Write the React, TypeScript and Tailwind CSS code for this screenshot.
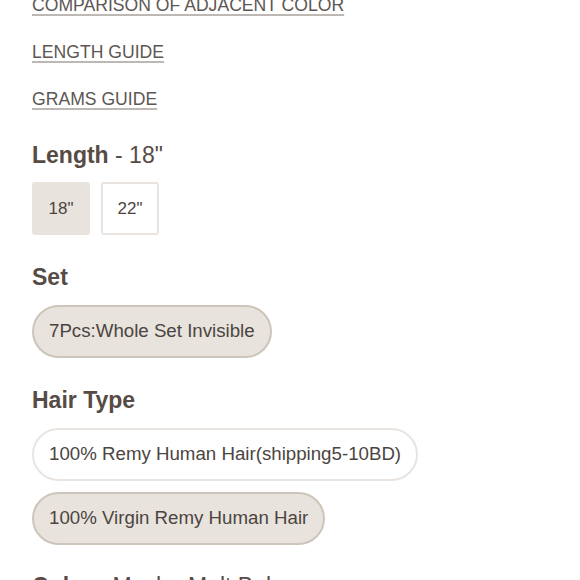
import React, { useState } from 'react';

const links = ['COMPARISON OF ADJACENT COLOR', 'LENGTH GUIDE', 'GRAMS GUIDE'];
const lengths = ['18"', '22"'];
const hairTypes = ['100% Remy Human Hair(shipping5-10BD)', '100% Virgin Remy Human Hair'];

const Heading: React.FC<{ label: string; value?: string; className?: string }> = ({ label, value, className }) => (
  <div className={`h-[28px] text-[23px] leading-[28px] text-[#574b45] whitespace-nowrap ${className ?? ''}`}>
    <span className="font-bold">{label}</span>
    {value && <span className="font-normal"> - {value}</span>}
  </div>
);

const Pill: React.FC<{ label: string; active: boolean; onClick: () => void }> = ({ label, active, onClick }) => (
  <button
    onClick={onClick}
    className={`h-[53px] self-start rounded-full border-2 px-[15px] text-[18.7px] text-[#4b4541] ${
      active ? 'bg-[#e8e3dd] border-[#cdc5bb]' : 'bg-white border-[#e9e4df]'
    }`}
  >
    {label}
  </button>
);

export default function App() {
  const [length, setLength] = useState('18"');
  const [set] = useState('7Pcs:Whole Set Invisible');
  const [hairType, setHairType] = useState(hairTypes[1]);

  return (
    <div className="h-[580px] w-[580px] overflow-hidden bg-white px-8 font-['Liberation_Sans',Arial,sans-serif]">
      <div className="-mt-[18px] flex flex-col">
        {links.map((l) => (
          <a
            key={l}
            href="#"
            className="block h-[47px] text-[17.6px] leading-[47px] text-[#5d5753] underline decoration-[#bdb8b4] decoration-2 underline-offset-[3px]"
          >
            {l}
          </a>
        ))}
      </div>

      <Heading label="Length" value={length} className="mt-[18px]" />
      <div className="mt-[13px] flex gap-[11px]">
        {lengths.map((l) => (
          <button
            key={l}
            onClick={() => setLength(l)}
            className={`flex h-[53px] w-[58px] items-center justify-center rounded-[3px] border-2 text-[17px] text-[#4b4541] ${
              length === l ? 'bg-[#e8e3dd] border-[#e8e3dd]' : 'bg-white border-[#e9e4df]'
            }`}
          >
            {l}
          </button>
        ))}
      </div>

      <Heading label="Set" className="mt-[28px]" />
      <div className="mt-[14px] flex flex-col">
        <Pill label={set} active onClick={() => {}} />
      </div>

      <Heading label="Hair Type" className="mt-[28px]" />
      <div className="mt-[14px] flex flex-col gap-[11px]">
        {hairTypes.map((h) => (
          <Pill key={h} label={h} active={hairType === h} onClick={() => setHairType(h)} />
        ))}
      </div>

      <Heading label="Color" value="Mocha Melt Balayage" className="mt-[27px]" />
    </div>
  );
}
